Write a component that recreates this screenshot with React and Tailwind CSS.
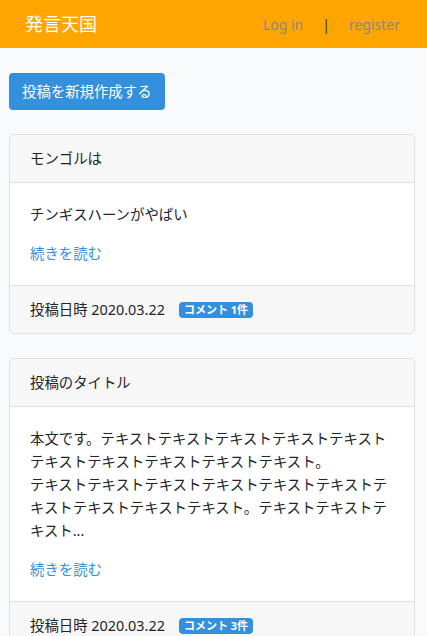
const posts = [
  {
    title: 'モンゴルは',
    body: 'チンギスハーンがやばい',
    date: '2020.03.22',
    comments: 1,
  },
  {
    title: '投稿のタイトル',
    body: '本文です。テキストテキストテキストテキストテキストテキストテキストテキストテキストテキスト。\nテキストテキストテキストテキストテキストテキストテキストテキストテキストテキスト。テキストテキストテキスト...',
    date: '2020.03.22',
    comments: 3,
  },
]

function PostCard({ post }) {
  return (
    <div className="mb-6 rounded-[4px] border border-[#dfdfdf] bg-white">
      {/* Header */}
      <div className="rounded-t-[4px] border-b border-[#dfdfdf] bg-[#f7f7f7] px-5 py-3 leading-[23px]">
        {post.title}
      </div>

      {/* Body */}
      <div className="p-5 leading-[23px]">
        <p className="mb-4 whitespace-pre-line break-all">{post.body}</p>
        <a href="#" className="text-[#3490dc]">続きを読む</a>
      </div>

      {/* Footer */}
      <div className="flex items-center rounded-b-[4px] border-t border-[#dfdfdf] bg-[#f7f7f7] px-5 py-3 leading-[23px]">
        <span>投稿日時 {post.date}</span>
        <span className="ml-[14px] rounded-[4px] bg-[#3490dc] px-[5px] py-[1px] text-[11px] font-bold leading-[14px] text-white">
          コメント {post.comments}件
        </span>
      </div>
    </div>
  )
}

export default function App() {
  return (
    <div
      className="min-h-screen bg-[#f8fafc] text-[14.4px] text-[#212529]"
      style={{ fontFamily: '"Noto Sans", "Noto Sans CJK JP", sans-serif' }}
    >
      {/* Navbar */}
      <nav className="flex h-12 items-center justify-between bg-[#ffa500] pl-[25px] pr-[27px]">
        <span className="text-[18px] text-white">発言天国</span>
        <div className="flex items-center text-[14px] text-[#888a82]">
          <a href="#">Log in</a>
          <span className="mx-[19px] text-[#333]">|</span>
          <a href="#">register</a>
        </div>
      </nav>

      <main className="pl-[9px] pr-[12px] pt-[25px]">
        <button className="mb-6 h-[37px] rounded-[4px] bg-[#3490dc] px-[13px] text-[14.4px] text-white">
          投稿を新規作成する
        </button>

        {posts.map((post, i) => (
          <PostCard key={i} post={post} />
        ))}
      </main>
    </div>
  )
}
